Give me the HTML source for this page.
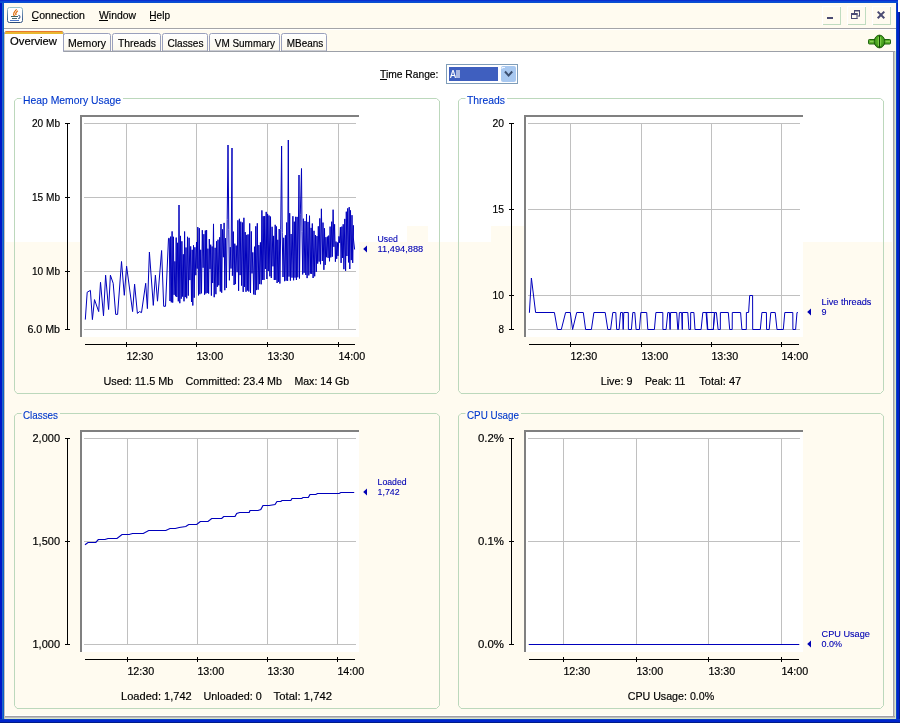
<!DOCTYPE html>
<html><head><meta charset="utf-8"><title>JConsole</title>
<style>html,body{margin:0;padding:0;background:#0016C8;overflow:hidden}svg{display:block;will-change:transform;font-family:"Liberation Sans",sans-serif}text{white-space:pre}</style></head>
<body>
<svg width="900" height="723" viewBox="0 0 900 723">
<rect x="0" y="0" width="900" height="723" fill="#0016C8" />
<rect x="2" y="0" width="1" height="723" fill="#2266C8" />
<rect x="3" y="0" width="1" height="723" fill="#0A5EC8" />
<rect x="896" y="0" width="1" height="723" fill="#0A44C4" />
<rect x="897" y="0" width="2" height="723" fill="#0024CC" />
<rect x="899" y="0" width="1" height="723" fill="#001C88" />
<rect x="0" y="0" width="900" height="1" fill="#0A30D0" />
<rect x="0" y="1" width="900" height="1" fill="#0A48D8" />
<rect x="0" y="2" width="900" height="1" fill="#0A50D0" />
<rect x="0" y="719" width="900" height="1" fill="#0A3CC0" />
<rect x="0" y="720" width="900" height="2" fill="#0024CC" />
<rect x="0" y="722" width="900" height="1" fill="#001C88" />
<rect x="898" y="0" width="2" height="12" fill="#FFFFFF" />
<rect x="4" y="3" width="892" height="716" fill="#FFFBF0" />
<rect x="4" y="28" width="892" height="1" fill="#A4A4A8" />
<rect x="4" y="29" width="892" height="1" fill="#FFFFFF" />
<defs><linearGradient id="ig" x1="0" y1="0" x2="0" y2="1"><stop offset="0" stop-color="#9CC4C8"/><stop offset="0.5" stop-color="#5C7CA8"/><stop offset="1" stop-color="#2C4C7C"/></linearGradient></defs>
<rect x="7.5" y="7.5" width="15" height="15" rx="2" ry="2" fill="#FFFFFF" stroke="url(#ig)" stroke-width="1"/>
<path d="M14.6 16.2 C12.2 13.8 14.6 11.4 16.6 9.4 M16.2 15.2 C14.6 13.2 16.4 12 17.8 10.8" stroke="#E06C08" stroke-width="1.15" fill="none"/>
<rect x="11" y="16" width="7" height="1" fill="#3C6468" />
<rect x="12" y="18" width="5" height="1" fill="#4C6C70" />
<rect x="10" y="20" width="9" height="1" fill="#4C74C8" />
<path d="M18.3 15.3 C20.6 15.6 20.6 18.4 18.2 18.6" stroke="#44608C" stroke-width="1.1" fill="none"/>
<text x="31.5" y="19" font-size="11" fill="#000" text-anchor="start" textLength="53.5" lengthAdjust="spacingAndGlyphs"  stroke="#000" stroke-width="0.18">Connection</text>
<rect x="32" y="20" width="6" height="1" fill="#000" />
<text x="99" y="19" font-size="11" fill="#000" text-anchor="start" textLength="37" lengthAdjust="spacingAndGlyphs"  stroke="#000" stroke-width="0.18">Window</text>
<rect x="99" y="20" width="9" height="1" fill="#000" />
<text x="149.3" y="19" font-size="11" fill="#000" text-anchor="start" textLength="20.7" lengthAdjust="spacingAndGlyphs"  stroke="#000" stroke-width="0.18">Help</text>
<rect x="150" y="20" width="6" height="1" fill="#000" />
<rect x="822" y="6" width="19" height="1" fill="#FFFFFF" />
<rect x="822" y="6" width="1" height="19" fill="#FFFFFF" />
<rect x="823" y="24" width="18" height="1" fill="#C0DCC0" />
<rect x="840" y="7" width="1" height="18" fill="#C0DCC0" />
<rect x="847" y="6" width="19" height="1" fill="#FFFFFF" />
<rect x="847" y="6" width="1" height="19" fill="#FFFFFF" />
<rect x="848" y="24" width="18" height="1" fill="#C0DCC0" />
<rect x="865" y="7" width="1" height="18" fill="#C0DCC0" />
<rect x="872" y="6" width="19" height="1" fill="#FFFFFF" />
<rect x="872" y="6" width="1" height="19" fill="#FFFFFF" />
<rect x="873" y="24" width="18" height="1" fill="#C0DCC0" />
<rect x="890" y="7" width="1" height="18" fill="#C0DCC0" />
<rect x="827" y="17" width="6" height="2" fill="#4A4A72" />
<rect x="854" y="10" width="6" height="1.5" fill="#4A4A72" />
<rect x="854" y="10" width="1" height="3" fill="#4A4A72" />
<rect x="859" y="10" width="1" height="6.5" fill="#4A4A72" />
<rect x="857.5" y="15.5" width="2" height="1" fill="#4A4A72" />
<rect x="851" y="13" width="6.5" height="2" fill="#4A4A72" />
<rect x="851" y="13" width="1" height="6" fill="#4A4A72" />
<rect x="856.5" y="13" width="1" height="6" fill="#4A4A72" />
<rect x="851" y="18" width="6.5" height="1" fill="#4A4A72" />
<path d="M877.7 11.6 L884.3 18.2 M884.3 11.6 L877.7 18.2" stroke="#4A4A72" stroke-width="2" fill="none"/>
<defs><radialGradient id="pg" cx="0.5" cy="0.45" r="0.6"><stop offset="0" stop-color="#68C030"/><stop offset="0.6" stop-color="#48A020"/><stop offset="1" stop-color="#22700C"/></radialGradient></defs>
<rect x="868.5" y="39.5" width="22" height="4.5" rx="0.8" fill="#5CB02C" stroke="#1E6410" stroke-width="1"/>
<rect x="870" y="41" width="20" height="1" fill="#8AD058" />
<ellipse cx="879.5" cy="41.5" rx="5.3" ry="6.4" fill="url(#pg)" stroke="#1C5C08" stroke-width="0.9"/>
<rect x="879" y="35.5" width="1" height="12.2" fill="#164808" />
<rect x="878" y="37" width="1" height="9" fill="#7CCC48" />
<rect x="880" y="37" width="1" height="9" fill="#7CCC48" />
<rect x="4" y="51" width="891" height="667" fill="#C8C4BC" />
<rect x="5" y="52" width="888" height="663" fill="#FFFFFF" />
<rect x="4" y="51" width="891" height="1" fill="#9CA0A8" />
<rect x="893" y="51" width="1" height="667" fill="#A0A0A4" />
<rect x="894" y="51" width="1" height="667" fill="#C4C4C4" />
<rect x="4" y="716" width="891" height="1" fill="#A0A0A4" />
<rect x="4" y="717" width="891" height="1" fill="#C0BCC0" />
<rect x="4" y="718" width="892" height="1" fill="#D8E8C8" />
<rect x="895" y="51" width="1" height="668" fill="#D8E8C8" />
<rect x="5" y="715" width="888" height="1" fill="#FFFFFF" />
<rect x="892" y="52" width="1" height="664" fill="#FFFFFF" />
<rect x="6" y="242" width="886" height="473" fill="#FFFBF0" />
<rect x="5" y="242" width="1" height="473" fill="#FFFFFF" />
<rect x="407" y="226" width="21" height="16" fill="#FFFBF0" />
<rect x="491" y="226" width="33" height="16" fill="#FFFBF0" />
<defs><linearGradient id="tg" x1="0" y1="0" x2="0" y2="1"><stop offset="0" stop-color="#FFFFFF"/><stop offset="1" stop-color="#FBF8EC"/></linearGradient></defs>
<path d="M63.5 51 V35.5 Q63.5 33.5 65.5 33.5 H108.5 Q110.5 33.5 110.5 35.5 V51 Z" fill="url(#tg)" stroke="#9AA0BC" stroke-width="1"/>
<text x="68" y="47" font-size="11" fill="#000" text-anchor="start" textLength="38" lengthAdjust="spacingAndGlyphs"  stroke="#000" stroke-width="0.18">Memory</text>
<path d="M112.5 51 V35.5 Q112.5 33.5 114.5 33.5 H158.5 Q160.5 33.5 160.5 35.5 V51 Z" fill="url(#tg)" stroke="#9AA0BC" stroke-width="1"/>
<text x="118" y="47" font-size="11" fill="#000" text-anchor="start" textLength="38" lengthAdjust="spacingAndGlyphs"  stroke="#000" stroke-width="0.18">Threads</text>
<path d="M162.5 51 V35.5 Q162.5 33.5 164.5 33.5 H205.5 Q207.5 33.5 207.5 35.5 V51 Z" fill="url(#tg)" stroke="#9AA0BC" stroke-width="1"/>
<text x="167.5" y="47" font-size="11" fill="#000" text-anchor="start" textLength="36" lengthAdjust="spacingAndGlyphs"  stroke="#000" stroke-width="0.18">Classes</text>
<path d="M209.5 51 V35.5 Q209.5 33.5 211.5 33.5 H277.5 Q279.5 33.5 279.5 35.5 V51 Z" fill="url(#tg)" stroke="#9AA0BC" stroke-width="1"/>
<text x="214.8" y="47" font-size="11" fill="#000" text-anchor="start" textLength="60.2" lengthAdjust="spacingAndGlyphs"  stroke="#000" stroke-width="0.18">VM Summary</text>
<path d="M281.5 51 V35.5 Q281.5 33.5 283.5 33.5 H324.5 Q326.5 33.5 326.5 35.5 V51 Z" fill="url(#tg)" stroke="#9AA0BC" stroke-width="1"/>
<text x="286.8" y="47" font-size="11" fill="#000" text-anchor="start" textLength="36.5" lengthAdjust="spacingAndGlyphs"  stroke="#000" stroke-width="0.18">MBeans</text>
<rect x="63" y="51" width="832" height="1" fill="#9CA0A8" />
<path d="M4.5 52 V33 Q4.5 31.5 6.5 31.5 H61.5 Q63.5 31.5 63.5 33.5 V51.5" fill="#FFFFFF" stroke="#9AA0BC" stroke-width="1"/>
<rect x="5" y="52" width="58" height="1" fill="#FFFFFF" />
<rect x="5" y="51" width="58" height="1" fill="#FFFFFF" />
<path d="M5 34 V33 Q5 31 7 31 H61 Q63 31 63 33 V34 Z" fill="#E8B830"/>
<path d="M5.5 32 Q5.5 31 7 31 H61 Q62.5 31 62.5 32 Z" fill="#E87830"/>
<rect x="4" y="34" width="1" height="685" fill="#C8C0B8" />
<text x="10" y="45" font-size="11" fill="#000" text-anchor="start" textLength="47" lengthAdjust="spacingAndGlyphs"  stroke="#000" stroke-width="0.18">Overview</text>
<text x="380" y="78" font-size="11" fill="#000" text-anchor="start" textLength="58.4" lengthAdjust="spacingAndGlyphs"  stroke="#000" stroke-width="0.18">Time Range:</text>
<rect x="380" y="79" width="7" height="1" fill="#000" />
<rect x="446.5" y="64.5" width="71" height="19" fill="#FFFFFF" stroke="#7F9DB9" stroke-width="1"/>
<rect x="449" y="67" width="49" height="14" fill="#3F5FBF" />
<text x="450" y="78" font-size="11" fill="#FFFFFF" text-anchor="start" textLength="10" lengthAdjust="spacingAndGlyphs"  stroke="#FFFFFF" stroke-width="0.18">All</text>
<rect x="501" y="66" width="15" height="16" rx="2" fill="#A8C8F0"/>
<path d="M502 69 V67.5 H505" stroke="#F0F6FF" stroke-width="1" fill="none"/>
<path d="M505 71.5 L508.6 75.6 L512.2 71.5" stroke="#3C5070" stroke-width="2" fill="none"/>
<path d="M21.5 98.5 H17 L14.5 101 V390.5 L17 393.5 H436.5 L439.5 390.5 V101 L436.5 98.5 H123" fill="none" stroke="#BCD8BC" stroke-width="1"/>
<text x="23" y="104" font-size="11" fill="#0038CC" text-anchor="start" textLength="98" lengthAdjust="spacingAndGlyphs" stroke="#0038CC" stroke-width="0.12">Heap Memory Usage</text>
<path d="M465.5 98.5 H461 L458.5 101 V390.5 L461 393.5 H880.5 L883.5 390.5 V101 L880.5 98.5 H507" fill="none" stroke="#BCD8BC" stroke-width="1"/>
<text x="467" y="104" font-size="11" fill="#0038CC" text-anchor="start" textLength="38" lengthAdjust="spacingAndGlyphs" stroke="#0038CC" stroke-width="0.12">Threads</text>
<path d="M21.5 413.5 H17 L14.5 416 V705.5 L17 708.5 H436.5 L439.5 705.5 V416 L436.5 413.5 H60" fill="none" stroke="#BCD8BC" stroke-width="1"/>
<text x="23" y="419" font-size="11" fill="#0038CC" text-anchor="start" textLength="35" lengthAdjust="spacingAndGlyphs" stroke="#0038CC" stroke-width="0.12">Classes</text>
<path d="M465.5 413.5 H461 L458.5 416 V705.5 L461 708.5 H880.5 L883.5 705.5 V416 L880.5 413.5 H521" fill="none" stroke="#BCD8BC" stroke-width="1"/>
<text x="467" y="419" font-size="11" fill="#0038CC" text-anchor="start" textLength="52" lengthAdjust="spacingAndGlyphs" stroke="#0038CC" stroke-width="0.12">CPU Usage</text>
<rect x="80" y="115" width="279" height="222" fill="#FFFFFF" />
<rect x="80" y="115" width="279" height="2" fill="#808080" />
<rect x="80" y="115" width="2" height="222" fill="#808080" />
<rect x="67" y="123" width="1" height="207" fill="#000" />
<rect x="65" y="123" width="5" height="1" fill="#000" />
<text x="60" y="127" font-size="11" fill="#000" text-anchor="end" textLength="28" lengthAdjust="spacingAndGlyphs"  stroke="#000" stroke-width="0.18">20 Mb</text>
<rect x="84" y="123" width="272" height="1" fill="#C0C0C0" />
<rect x="65" y="197" width="5" height="1" fill="#000" />
<text x="60" y="201" font-size="11" fill="#000" text-anchor="end" textLength="28" lengthAdjust="spacingAndGlyphs"  stroke="#000" stroke-width="0.18">15 Mb</text>
<rect x="84" y="197" width="272" height="1" fill="#C0C0C0" />
<rect x="65" y="271" width="5" height="1" fill="#000" />
<text x="60" y="275" font-size="11" fill="#000" text-anchor="end" textLength="28" lengthAdjust="spacingAndGlyphs"  stroke="#000" stroke-width="0.18">10 Mb</text>
<rect x="84" y="271" width="272" height="1" fill="#C0C0C0" />
<rect x="65" y="329" width="5" height="1" fill="#000" />
<text x="60" y="333" font-size="11" fill="#000" text-anchor="end" textLength="32.6" lengthAdjust="spacingAndGlyphs"  stroke="#000" stroke-width="0.18">6.0 Mb</text>
<rect x="84" y="329" width="272" height="1" fill="#C0C0C0" />
<rect x="126" y="123" width="1" height="207" fill="#C0C0C0" />
<rect x="196" y="123" width="1" height="207" fill="#C0C0C0" />
<rect x="267" y="123" width="1" height="207" fill="#C0C0C0" />
<rect x="338" y="123" width="1" height="207" fill="#C0C0C0" />
<rect x="85" y="344" width="270" height="1" fill="#000" />
<rect x="126" y="342" width="1" height="5" fill="#000" />
<text x="126.4" y="360" font-size="11" fill="#000" text-anchor="start" textLength="26.8" lengthAdjust="spacingAndGlyphs"  stroke="#000" stroke-width="0.18">12:30</text>
<rect x="196" y="342" width="1" height="5" fill="#000" />
<text x="196.4" y="360" font-size="11" fill="#000" text-anchor="start" textLength="26.8" lengthAdjust="spacingAndGlyphs"  stroke="#000" stroke-width="0.18">13:00</text>
<rect x="267" y="342" width="1" height="5" fill="#000" />
<text x="267.4" y="360" font-size="11" fill="#000" text-anchor="start" textLength="26.8" lengthAdjust="spacingAndGlyphs"  stroke="#000" stroke-width="0.18">13:30</text>
<rect x="338" y="342" width="1" height="5" fill="#000" />
<text x="338.4" y="360" font-size="11" fill="#000" text-anchor="start" textLength="26.8" lengthAdjust="spacingAndGlyphs"  stroke="#000" stroke-width="0.18">14:00</text>
<polyline points="85.3,319.6 87.2,292.2 90.4,290.4 92.4,319.6 94.5,299.6 98.7,311.6 100.5,282.3 103.5,315.8 105.6,275.2 108.6,309.5 110.4,275.2 113.2,283.3 115.7,314.4 117.6,314.4 121.5,261.5 124.3,295.3 126.6,266.2 132.6,311.6 134.6,284.2 137.4,313.4 139.5,311.6 141.5,312.6 145.7,283.3 147.4,308.6 149.4,252.1 153.3,305.4 155.4,275.2 157.5,301.2 161.6,250.5 163.7,306.3 165.5,306.3 168.5,238.3 169.3,238.3 170.0,301.0 170.7,236.6 171.3,302.3 172.1,231.4 172.7,302.6 173.4,236.8 174.1,294.8 174.9,261.4 175.5,296.2 176.2,237.6 176.8,297.0 177.6,242.8 178.3,301.3 179.0,205.0 179.8,303.2 180.5,235.9 181.2,298.7 181.9,241.3 182.6,296.6 183.3,254.3 184.0,301.3 184.6,231.5 185.3,297.1 186.0,247.5 186.7,298.3 187.5,236.8 188.3,295.6 189.1,237.8 189.9,280.1 190.7,246.4 191.5,302.0 192.2,249.8 192.8,305.5 193.5,245.3 194.2,297.7 194.9,247.3 195.8,275.2 196.5,242.0 197.2,268.6 197.8,227.1 198.5,295.4 199.3,228.2 199.9,294.2 200.7,249.8 201.5,293.3 202.3,230.2 203.1,267.7 203.9,234.2 204.6,294.7 205.3,230.5 205.9,293.5 206.6,230.1 207.2,293.0 207.9,248.7 208.6,293.6 209.3,239.1 210.0,268.9 210.7,244.7 211.4,295.6 212.1,246.5 212.7,283.0 213.5,223.9 214.2,297.2 215.1,247.8 215.9,294.2 216.5,241.3 217.3,286.8 218.0,239.7 218.8,285.3 219.7,237.3 220.3,291.5 221.0,224.0 221.7,292.7 222.5,229.4 223.4,257.2 224.1,222.9 224.8,290.2 225.5,238.2 226.4,287.9 227.2,219.7 228.0,145.0 228.8,229.3 229.4,280.3 230.3,247.2 231.0,268.5 232.0,148.0 232.4,275.7 233.3,231.6 234.1,285.0 234.8,243.7 235.4,284.1 236.2,245.6 237.1,272.2 237.9,220.3 238.6,290.8 239.4,218.8 240.1,275.1 240.8,221.7 241.6,285.6 242.4,222.5 243.2,291.9 243.9,217.8 244.5,286.8 245.2,232.1 246.0,291.8 246.8,234.9 247.4,290.5 248.1,234.4 248.8,291.5 249.7,223.4 250.5,293.0 251.3,231.4 252.0,273.4 252.8,252.4 253.7,294.4 254.5,246.7 255.2,294.9 255.8,226.3 256.4,290.1 257.3,223.3 258.1,289.7 258.9,245.1 259.6,284.1 260.4,242.4 261.2,284.3 261.9,210.4 262.6,279.9 263.2,216.2 264.0,279.9 264.7,216.1 265.4,269.0 266.2,211.9 266.9,279.0 267.6,213.9 268.3,271.0 269.0,215.5 269.9,276.3 270.5,216.6 271.3,278.0 272.1,226.8 273.0,266.3 273.6,235.9 274.3,280.0 275.2,224.8 275.8,279.9 276.5,226.5 277.1,283.0 277.8,239.8 278.5,281.8 279.2,229.0 279.9,283.5 280.7,229.7 281.6,146.0 282.2,232.5 283.0,277.0 283.7,237.8 284.6,281.2 285.4,235.3 286.1,280.7 286.7,222.5 287.6,280.9 288.3,140.0 289.0,276.6 289.7,213.2 290.4,280.6 291.1,234.0 292.0,277.6 292.9,216.2 293.6,280.3 294.3,221.7 295.0,277.6 295.7,216.8 296.4,280.0 297.1,216.9 297.8,277.3 299.0,175.0 299.5,278.5 300.3,214.2 301.5,168.5 302.0,231.4 302.7,274.5 303.4,218.7 304.1,272.8 305.0,221.1 305.8,275.0 306.5,214.0 307.1,278.1 308.0,221.9 308.8,275.4 309.5,215.7 310.3,273.7 311.1,227.9 311.7,273.9 312.3,223.5 313.1,278.0 314.0,230.8 314.7,276.3 315.5,235.0 316.3,271.8 317.0,236.1 317.7,263.6 318.3,226.3 319.1,261.6 319.8,218.4 320.5,264.2 321.4,208.8 322.3,261.0 323.0,222.6 323.9,269.8 324.5,228.3 325.2,264.9 325.9,237.2 326.6,257.2 327.4,236.6 328.1,257.9 328.7,235.6 329.5,261.3 330.1,226.6 330.8,257.4 331.7,221.7 332.3,256.7 333.1,209.7 333.9,246.8 334.6,224.3 335.4,261.7 336.0,241.6 336.7,258.8 337.4,242.5 338.0,255.9 338.9,236.4 339.7,242.9 340.4,227.2 341.1,262.9 341.9,226.6 342.6,258.0 343.2,224.3 343.9,269.2 344.8,218.9 345.6,270.8 346.3,211.7 346.9,256.0 347.7,208.4 348.5,262.4 349.2,207.2 349.8,269.0 350.5,210.4 351.3,260.1 352.0,215.2 352.7,262.9 353.4,225.4 353.2,237.0 354.6,249.5" fill="none" stroke="#0000BC" stroke-width="1" stroke-linejoin="miter"/>
<path d="M367 245.5 V252.5 L363.2 249 Z" fill="#0000B4"/>
<text x="377.6" y="241.8" font-size="9.9" fill="#0000B4" text-anchor="start" textLength="20.3" lengthAdjust="spacingAndGlyphs" stroke="#0000B4" stroke-width="0.12">Used</text>
<text x="377.6" y="252" font-size="9.9" fill="#0000B4" text-anchor="start" textLength="45.6" lengthAdjust="spacingAndGlyphs" stroke="#0000B4" stroke-width="0.12">11,494,888</text>
<text x="103.4" y="385" font-size="11" fill="#000" text-anchor="start" textLength="70" lengthAdjust="spacingAndGlyphs"  stroke="#000" stroke-width="0.18">Used: 11.5 Mb</text>
<text x="185.5" y="385" font-size="11" fill="#000" text-anchor="start" textLength="96.5" lengthAdjust="spacingAndGlyphs"  stroke="#000" stroke-width="0.18">Committed: 23.4 Mb</text>
<text x="294.4" y="385" font-size="11" fill="#000" text-anchor="start" textLength="54.8" lengthAdjust="spacingAndGlyphs"  stroke="#000" stroke-width="0.18">Max: 14 Gb</text>
<rect x="524" y="115" width="279" height="222" fill="#FFFFFF" />
<rect x="524" y="115" width="279" height="2" fill="#808080" />
<rect x="524" y="115" width="2" height="222" fill="#808080" />
<rect x="511" y="123" width="1" height="207" fill="#000" />
<rect x="509" y="123" width="5" height="1" fill="#000" />
<text x="504" y="127" font-size="11" fill="#000" text-anchor="end" textLength="11.5" lengthAdjust="spacingAndGlyphs"  stroke="#000" stroke-width="0.18">20</text>
<rect x="528" y="123" width="272" height="1" fill="#C0C0C0" />
<rect x="509" y="209" width="5" height="1" fill="#000" />
<text x="504" y="213" font-size="11" fill="#000" text-anchor="end" textLength="11.5" lengthAdjust="spacingAndGlyphs"  stroke="#000" stroke-width="0.18">15</text>
<rect x="528" y="209" width="272" height="1" fill="#C0C0C0" />
<rect x="509" y="295" width="5" height="1" fill="#000" />
<text x="504" y="299" font-size="11" fill="#000" text-anchor="end" textLength="11.5" lengthAdjust="spacingAndGlyphs"  stroke="#000" stroke-width="0.18">10</text>
<rect x="528" y="295" width="272" height="1" fill="#C0C0C0" />
<rect x="509" y="329" width="5" height="1" fill="#000" />
<text x="504" y="333" font-size="11" fill="#000" text-anchor="end" textLength="5.5" lengthAdjust="spacingAndGlyphs"  stroke="#000" stroke-width="0.18">8</text>
<rect x="528" y="329" width="272" height="1" fill="#C0C0C0" />
<rect x="570" y="123" width="1" height="207" fill="#C0C0C0" />
<rect x="641" y="123" width="1" height="207" fill="#C0C0C0" />
<rect x="711" y="123" width="1" height="207" fill="#C0C0C0" />
<rect x="781" y="123" width="1" height="207" fill="#C0C0C0" />
<rect x="529" y="344" width="270" height="1" fill="#000" />
<rect x="570" y="342" width="1" height="5" fill="#000" />
<text x="570.4" y="360" font-size="11" fill="#000" text-anchor="start" textLength="26.8" lengthAdjust="spacingAndGlyphs"  stroke="#000" stroke-width="0.18">12:30</text>
<rect x="641" y="342" width="1" height="5" fill="#000" />
<text x="641.4" y="360" font-size="11" fill="#000" text-anchor="start" textLength="26.8" lengthAdjust="spacingAndGlyphs"  stroke="#000" stroke-width="0.18">13:00</text>
<rect x="711" y="342" width="1" height="5" fill="#000" />
<text x="711.4" y="360" font-size="11" fill="#000" text-anchor="start" textLength="26.8" lengthAdjust="spacingAndGlyphs"  stroke="#000" stroke-width="0.18">13:30</text>
<rect x="781" y="342" width="1" height="5" fill="#000" />
<text x="781.4" y="360" font-size="11" fill="#000" text-anchor="start" textLength="26.8" lengthAdjust="spacingAndGlyphs"  stroke="#000" stroke-width="0.18">14:00</text>
<polyline points="529.4,312.8 531.4,278.0 535.6,312.5 554.4,312.5 557.4,329.5 561.3,329.5 565.6,312.5 570.3,312.5 572.6,329.5 576.7,312.5 583.3,312.5 585.6,329.5 591.4,329.5 593.9,312.5 605.2,312.5 607.8,329.5 610.6,329.5 612.8,312.5 615.6,312.5 615.8,312.5 616.7,329.5 619.1,329.5 620.6,312.5 622.6,312.5 623.2,329.5 623.8,312.5 628.3,312.5 628.4,329.5 631.4,329.5 632.8,312.5 634.8,312.5 636.1,329.5 639.4,329.5 640.8,312.5 646.7,312.5 647.8,329.5 654.4,329.5 655.9,312.5 662.8,312.5 662.9,329.5 666.1,329.5 667.8,312.5 669.4,312.5 670.1,329.5 670.6,312.5 676.7,312.5 677.8,329.5 678.3,329.5 679.4,312.5 681.7,312.5 682.3,329.5 682.4,312.5 687.8,312.5 688.9,329.5 690.6,329.5 690.7,312.5 693.9,312.5 695.0,329.5 701.1,329.5 702.8,312.5 706.7,312.5 707.8,329.5 713.3,329.5 714.4,312.5 706.1,312.5 707.4,329.5 713.3,329.5 714.8,312.5 716.4,312.5 718.1,329.5 720.3,329.5 720.4,312.5 728.3,312.5 729.7,329.5 732.2,329.5 732.3,312.5 740.6,312.5 741.9,329.5 746.3,329.5 746.4,312.5 748.6,312.5 749.7,295.5 752.6,295.5 752.7,329.5 760.3,329.5 761.9,312.5 766.4,312.5 766.6,329.5 769.2,329.5 770.8,312.5 775.2,312.5 777.0,329.5 783.3,329.5 784.8,312.5 792.8,312.5 792.9,329.5 795.6,329.5 797.0,312.5 797.8,312.5" fill="none" stroke="#0000BC" stroke-width="1" stroke-linejoin="miter"/>
<path d="M811 308.5 V315.5 L807.2 312 Z" fill="#0000B4"/>
<text x="821.6" y="304.8" font-size="9.9" fill="#0000B4" text-anchor="start" textLength="49.8" lengthAdjust="spacingAndGlyphs" stroke="#0000B4" stroke-width="0.12">Live threads</text>
<text x="821.6" y="315" font-size="9.9" fill="#0000B4" text-anchor="start" textLength="5" lengthAdjust="spacingAndGlyphs" stroke="#0000B4" stroke-width="0.12">9</text>
<text x="600.7" y="385" font-size="11" fill="#000" text-anchor="start" textLength="31.7" lengthAdjust="spacingAndGlyphs"  stroke="#000" stroke-width="0.18">Live: 9</text>
<text x="644.9" y="385" font-size="11" fill="#000" text-anchor="start" textLength="40.4" lengthAdjust="spacingAndGlyphs"  stroke="#000" stroke-width="0.18">Peak: 11</text>
<text x="699.3" y="385" font-size="11" fill="#000" text-anchor="start" textLength="42" lengthAdjust="spacingAndGlyphs"  stroke="#000" stroke-width="0.18">Total: 47</text>
<rect x="80" y="430" width="279" height="222" fill="#FFFFFF" />
<rect x="80" y="430" width="279" height="2" fill="#808080" />
<rect x="80" y="430" width="2" height="222" fill="#808080" />
<rect x="67" y="438" width="1" height="207" fill="#000" />
<rect x="65" y="438" width="5" height="1" fill="#000" />
<text x="60" y="442" font-size="11" fill="#000" text-anchor="end" textLength="27.5" lengthAdjust="spacingAndGlyphs"  stroke="#000" stroke-width="0.18">2,000</text>
<rect x="84" y="438" width="272" height="1" fill="#C0C0C0" />
<rect x="65" y="541" width="5" height="1" fill="#000" />
<text x="60" y="545" font-size="11" fill="#000" text-anchor="end" textLength="27.5" lengthAdjust="spacingAndGlyphs"  stroke="#000" stroke-width="0.18">1,500</text>
<rect x="84" y="541" width="272" height="1" fill="#C0C0C0" />
<rect x="65" y="644" width="5" height="1" fill="#000" />
<text x="60" y="648" font-size="11" fill="#000" text-anchor="end" textLength="27.5" lengthAdjust="spacingAndGlyphs"  stroke="#000" stroke-width="0.18">1,000</text>
<rect x="84" y="644" width="272" height="1" fill="#C0C0C0" />
<rect x="127" y="438" width="1" height="207" fill="#C0C0C0" />
<rect x="197" y="438" width="1" height="207" fill="#C0C0C0" />
<rect x="267" y="438" width="1" height="207" fill="#C0C0C0" />
<rect x="337" y="438" width="1" height="207" fill="#C0C0C0" />
<rect x="85" y="659" width="270" height="1" fill="#000" />
<rect x="127" y="657" width="1" height="5" fill="#000" />
<text x="127.4" y="675" font-size="11" fill="#000" text-anchor="start" textLength="26.8" lengthAdjust="spacingAndGlyphs"  stroke="#000" stroke-width="0.18">12:30</text>
<rect x="197" y="657" width="1" height="5" fill="#000" />
<text x="197.4" y="675" font-size="11" fill="#000" text-anchor="start" textLength="26.8" lengthAdjust="spacingAndGlyphs"  stroke="#000" stroke-width="0.18">13:00</text>
<rect x="267" y="657" width="1" height="5" fill="#000" />
<text x="267.4" y="675" font-size="11" fill="#000" text-anchor="start" textLength="26.8" lengthAdjust="spacingAndGlyphs"  stroke="#000" stroke-width="0.18">13:30</text>
<rect x="337" y="657" width="1" height="5" fill="#000" />
<text x="337.4" y="675" font-size="11" fill="#000" text-anchor="start" textLength="26.8" lengthAdjust="spacingAndGlyphs"  stroke="#000" stroke-width="0.18">14:00</text>
<polyline points="85.0,544.7 88.0,542.5 95.8,542.5 98.3,539.5 105.0,539.5 108.0,538.5 117.0,538.5 122.0,534.5 129.2,534.5 132.5,533.5 143.3,533.5 148.7,530.5 165.8,530.5 170.0,528.5 175.3,528.5 179.2,527.5 185.8,526.5 188.7,524.5 196.7,524.5 200.3,521.5 208.0,521.5 211.7,518.5 221.7,518.5 223.7,516.5 235.0,516.5 236.7,513.5 239.7,512.5 249.2,512.5 250.0,510.5 258.0,510.5 260.8,509.5 263.0,505.5 269.2,505.5 275.0,504.5 277.0,501.5 280.8,501.5 282.0,500.5 290.8,500.5 292.0,498.5 301.7,498.5 303.0,497.5 308.3,497.5 310.0,494.5 315.8,494.5 317.5,493.5 339.2,493.5 340.8,492.5 354.2,492.5" fill="none" stroke="#0000BC" stroke-width="1.2" stroke-linejoin="miter"/>
<path d="M367 488.5 V495.5 L363.2 492 Z" fill="#0000B4"/>
<text x="377.6" y="484.8" font-size="9.9" fill="#0000B4" text-anchor="start" textLength="29" lengthAdjust="spacingAndGlyphs" stroke="#0000B4" stroke-width="0.12">Loaded</text>
<text x="377.6" y="495" font-size="9.9" fill="#0000B4" text-anchor="start" textLength="22" lengthAdjust="spacingAndGlyphs" stroke="#0000B4" stroke-width="0.12">1,742</text>
<text x="121.1" y="700" font-size="11" fill="#000" text-anchor="start" textLength="70.6" lengthAdjust="spacingAndGlyphs"  stroke="#000" stroke-width="0.18">Loaded: 1,742</text>
<text x="203.6" y="700" font-size="11" fill="#000" text-anchor="start" textLength="58.1" lengthAdjust="spacingAndGlyphs"  stroke="#000" stroke-width="0.18">Unloaded: 0</text>
<text x="273.6" y="700" font-size="11" fill="#000" text-anchor="start" textLength="58.4" lengthAdjust="spacingAndGlyphs"  stroke="#000" stroke-width="0.18">Total: 1,742</text>
<rect x="524" y="430" width="279" height="222" fill="#FFFFFF" />
<rect x="524" y="430" width="279" height="2" fill="#808080" />
<rect x="524" y="430" width="2" height="222" fill="#808080" />
<rect x="511" y="438" width="1" height="207" fill="#000" />
<rect x="509" y="438" width="5" height="1" fill="#000" />
<text x="504" y="442" font-size="11" fill="#000" text-anchor="end" textLength="26" lengthAdjust="spacingAndGlyphs"  stroke="#000" stroke-width="0.18">0.2%</text>
<rect x="528" y="438" width="272" height="1" fill="#C0C0C0" />
<rect x="509" y="541" width="5" height="1" fill="#000" />
<text x="504" y="545" font-size="11" fill="#000" text-anchor="end" textLength="26" lengthAdjust="spacingAndGlyphs"  stroke="#000" stroke-width="0.18">0.1%</text>
<rect x="528" y="541" width="272" height="1" fill="#C0C0C0" />
<rect x="509" y="644" width="5" height="1" fill="#000" />
<text x="504" y="648" font-size="11" fill="#000" text-anchor="end" textLength="26" lengthAdjust="spacingAndGlyphs"  stroke="#000" stroke-width="0.18">0.0%</text>
<rect x="528" y="644" width="272" height="1" fill="#C0C0C0" />
<rect x="563" y="438" width="1" height="207" fill="#C0C0C0" />
<rect x="636" y="438" width="1" height="207" fill="#C0C0C0" />
<rect x="708" y="438" width="1" height="207" fill="#C0C0C0" />
<rect x="781" y="438" width="1" height="207" fill="#C0C0C0" />
<rect x="529" y="659" width="270" height="1" fill="#000" />
<rect x="563" y="657" width="1" height="5" fill="#000" />
<text x="563.4" y="675" font-size="11" fill="#000" text-anchor="start" textLength="26.8" lengthAdjust="spacingAndGlyphs"  stroke="#000" stroke-width="0.18">12:30</text>
<rect x="636" y="657" width="1" height="5" fill="#000" />
<text x="636.4" y="675" font-size="11" fill="#000" text-anchor="start" textLength="26.8" lengthAdjust="spacingAndGlyphs"  stroke="#000" stroke-width="0.18">13:00</text>
<rect x="708" y="657" width="1" height="5" fill="#000" />
<text x="708.4" y="675" font-size="11" fill="#000" text-anchor="start" textLength="26.8" lengthAdjust="spacingAndGlyphs"  stroke="#000" stroke-width="0.18">13:30</text>
<rect x="781" y="657" width="1" height="5" fill="#000" />
<text x="781.4" y="675" font-size="11" fill="#000" text-anchor="start" textLength="26.8" lengthAdjust="spacingAndGlyphs"  stroke="#000" stroke-width="0.18">14:00</text>
<rect x="529" y="644" width="270" height="1" fill="#0000BC"/>
<path d="M811 640.5 V647.5 L807.2 644 Z" fill="#0000B4"/>
<text x="821.6" y="636.8" font-size="9.9" fill="#0000B4" text-anchor="start" textLength="48.2" lengthAdjust="spacingAndGlyphs" stroke="#0000B4" stroke-width="0.12">CPU Usage</text>
<text x="821.6" y="647" font-size="9.9" fill="#0000B4" text-anchor="start" textLength="20.5" lengthAdjust="spacingAndGlyphs" stroke="#0000B4" stroke-width="0.12">0.0%</text>
<text x="627.7" y="700" font-size="11" fill="#000" text-anchor="start" textLength="86.5" lengthAdjust="spacingAndGlyphs"  stroke="#000" stroke-width="0.18">CPU Usage: 0.0%</text>
</svg>
</body></html>
